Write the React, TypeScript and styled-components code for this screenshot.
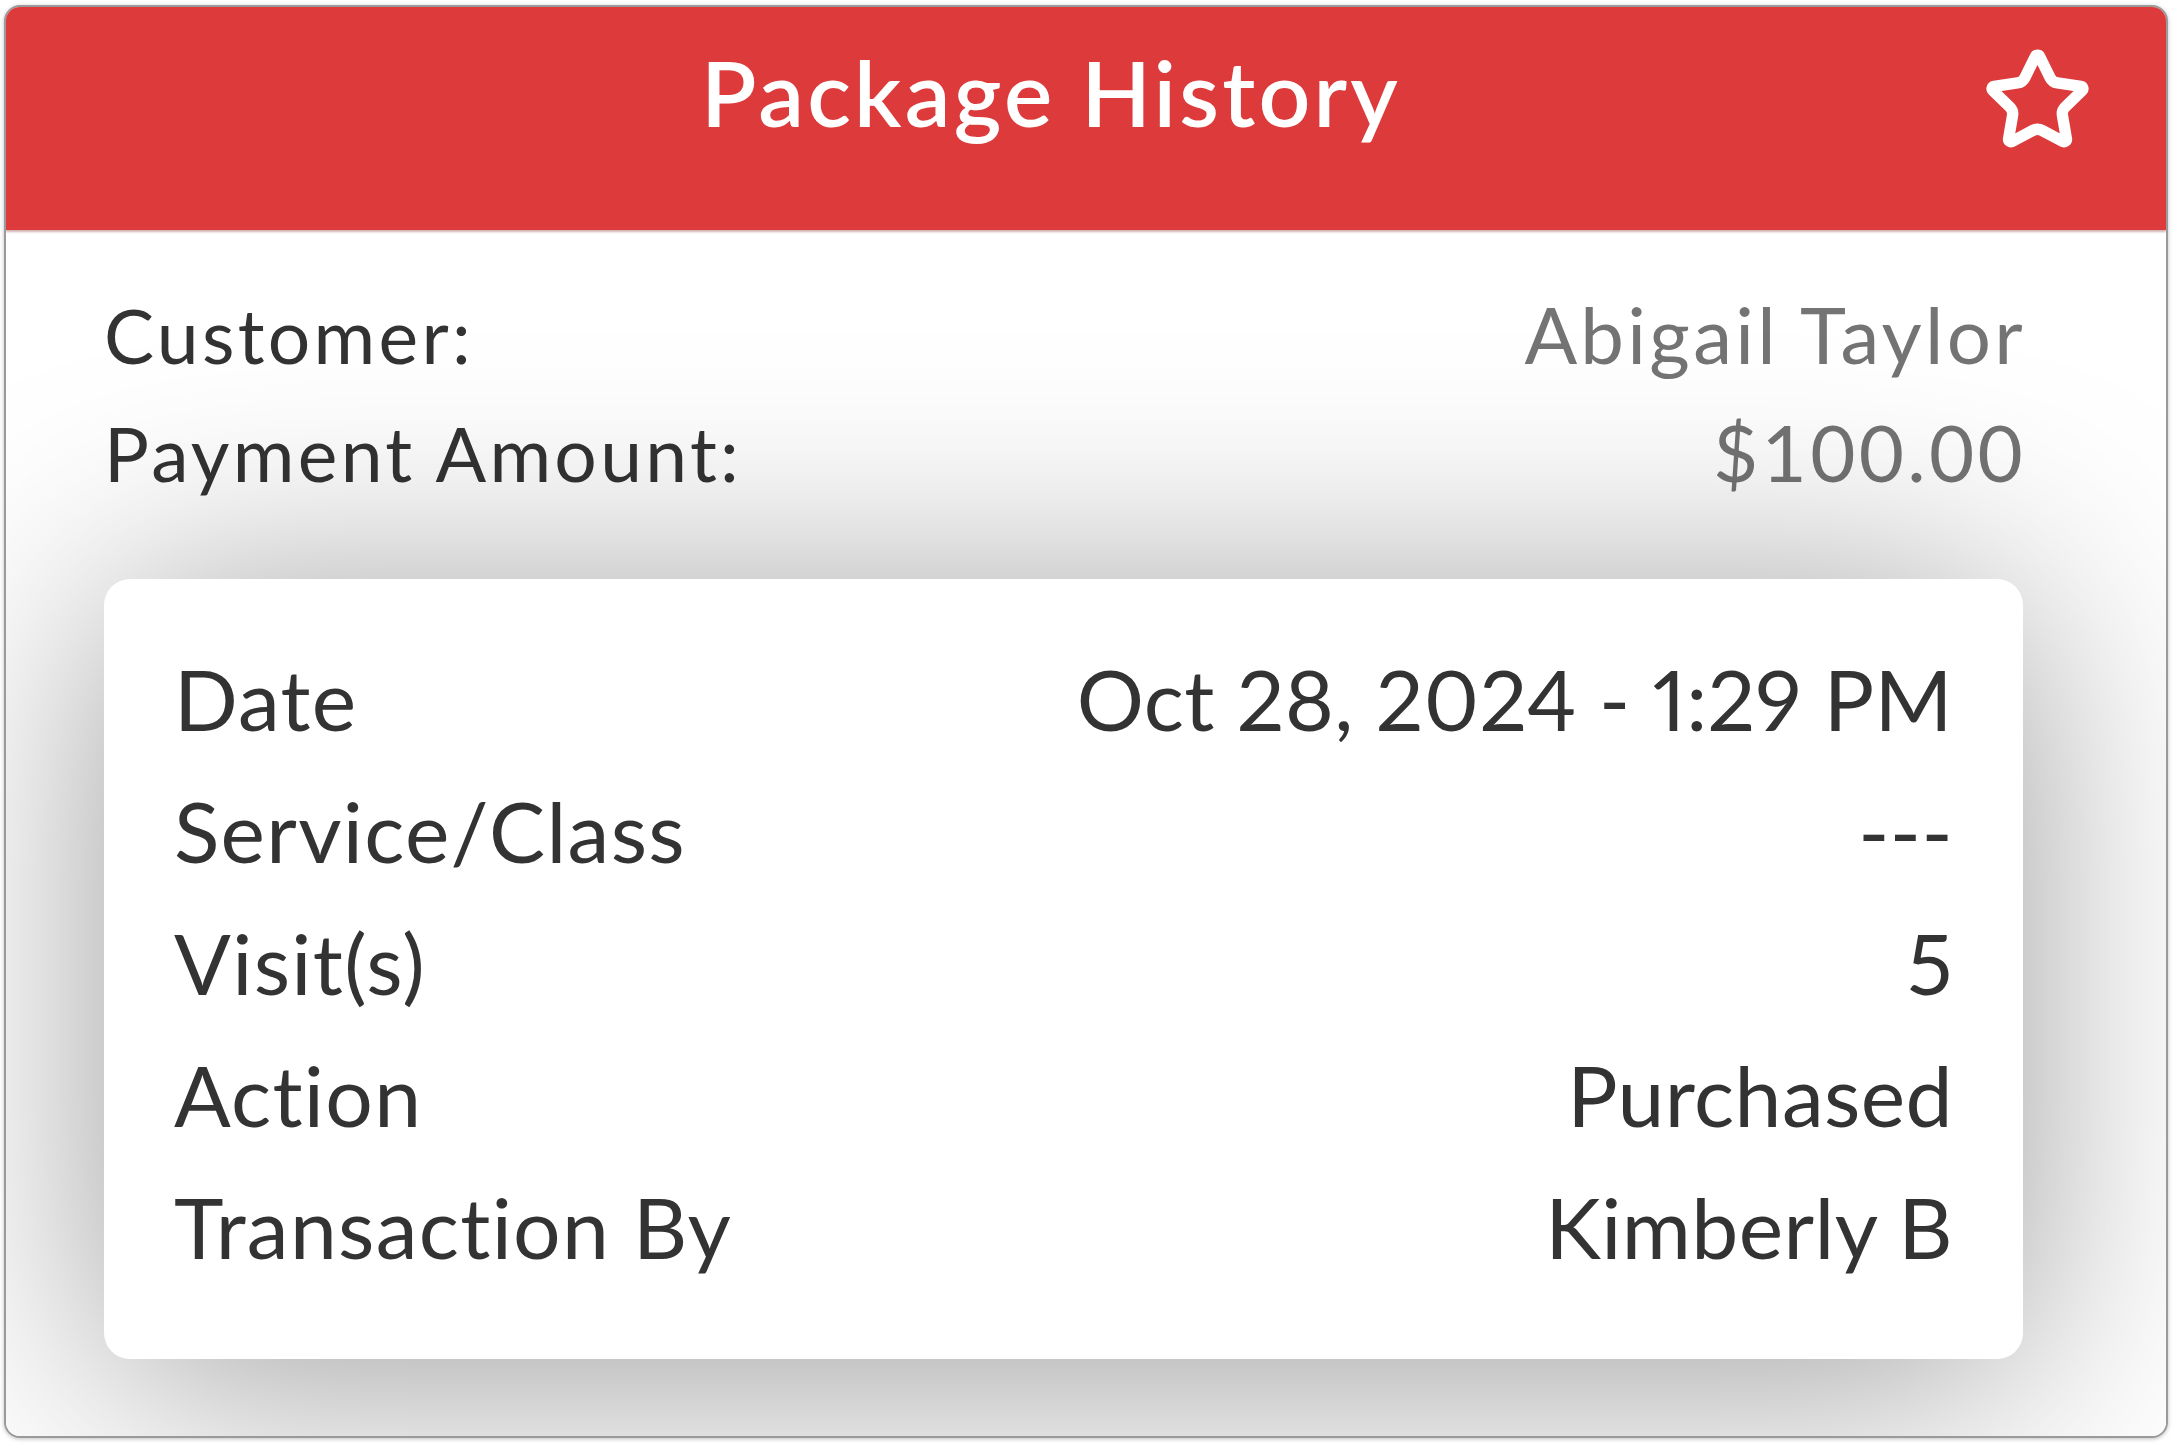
import React from "react"
import styled, { createGlobalStyle } from "styled-components"
import { Star } from "lucide-react"

/////////////////////////////////////////////////////////////////////////////

const summary = [
  { label: "Customer:", value: "Abigail Taylor" },
  { label: "Payment Amount:", value: "$100.00" },
]

const details = [
  { label: "Date", value: "Oct 28, 2024 - 1:29 PM" },
  { label: "Service/Class", value: "---" },
  { label: "Visit(s)", value: "5" },
  { label: "Action", value: "Purchased" },
  { label: "Transaction By", value: "Kimberly B" },
]

const App = () => {
  return (
    <>
      <GlobalStyle />
      <Page>
        <Card>
          <Header>
            <span />
            <Title>Package History</Title>
            <StarButton aria-label="Favourite">
              <Star size={109} strokeWidth={2.5} color="#ffffff" />
            </StarButton>
          </Header>

          <Body>
            <Summary>
              {summary.map((row) => (
                <SummaryRow key={row.label}>
                  <SummaryLabel>{row.label}</SummaryLabel>
                  <SummaryValue>{row.value}</SummaryValue>
                </SummaryRow>
              ))}
            </Summary>

            <DetailCard>
              {details.map((row) => (
                <DetailRow key={row.label}>
                  <DetailLabel>{row.label}</DetailLabel>
                  <DetailValue>{row.value}</DetailValue>
                </DetailRow>
              ))}
            </DetailCard>
          </Body>
        </Card>
      </Page>
    </>
  )
}

/////////////////////////////////////////////////////////////////////////////

const FONT = `"Lato", "Open Sans", "Liberation Sans", sans-serif`
const RED = "#dd3a3b"

const GlobalStyle = createGlobalStyle`
  html, body {
    margin: 0;
    padding: 0;
    background: #ffffff;
  }
  * {
    box-sizing: border-box;
  }
`

const Page = styled.div`
  width: 2175px;
  height: 1445px;
  padding: 5px 7px 7px 4px;
  font-family: ${FONT};
  font-variant-ligatures: none;
`

const Card = styled.div`
  height: 100%;
  display: flex;
  flex-direction: column;
  border: 2px solid #9a9a9a;
  border-radius: 16px;
  overflow: hidden;
  background: #ffffff;
  box-shadow: 0 1px 4px rgba(0, 0, 0, 0.25);
`

const Header = styled.header`
  flex: 0 0 223px;
  display: grid;
  grid-template-columns: 1fr auto 1fr;
  align-items: start;
  padding: 30px 74px 0 0;
  background: ${RED};
  box-shadow: 0 2px 2px rgba(120, 30, 30, 0.35);
  position: relative;
  z-index: 1;
`

const Title = styled.h1`
  margin: 0 0 0 4px;
  font-size: 91px;
  line-height: 1.2;
  font-weight: 600;
  letter-spacing: 3.2px;
  color: #ffffff;
  white-space: nowrap;
`

const StarButton = styled.button`
  justify-self: end;
  margin-top: 9px;
  padding: 0;
  border: none;
  background: transparent;
  display: flex;
  cursor: pointer;
`

const Body = styled.main`
  flex: 1;
  display: flex;
  flex-direction: column;
  padding: 46px 143px 0 98px;
  background: #ffffff;
`

const Summary = styled.section`
  display: flex;
  flex-direction: column;
  margin-bottom: 67px;
`

const SummaryRow = styled.div`
  display: flex;
  justify-content: space-between;
  align-items: baseline;
  line-height: 117px;
`

const SummaryLabel = styled.span`
  font-size: 75px;
  letter-spacing: 3.3px;
  color: #333333;
`

const SummaryValue = styled.span`
  font-size: 78px;
  letter-spacing: 3.3px;
  margin-right: -3px;
  color: #747474;
`

const DetailCard = styled.section`
  display: flex;
  flex-direction: column;
  padding: 54px 70px 66px 70px;
  border-radius: 26px;
  background: #ffffff;
  box-shadow: 0 20px 240px rgba(0, 0, 0, 0.4);
  position: relative;
`

const DetailRow = styled.div`
  display: flex;
  justify-content: space-between;
  font-size: 84px;
  line-height: 132px;
  color: #333333;
`

const DetailLabel = styled.span`
  letter-spacing: 1.3px;
`

const DetailValue = styled.span`
  letter-spacing: 0.4px;
  font-variant-numeric: proportional-nums;
`

export default App
